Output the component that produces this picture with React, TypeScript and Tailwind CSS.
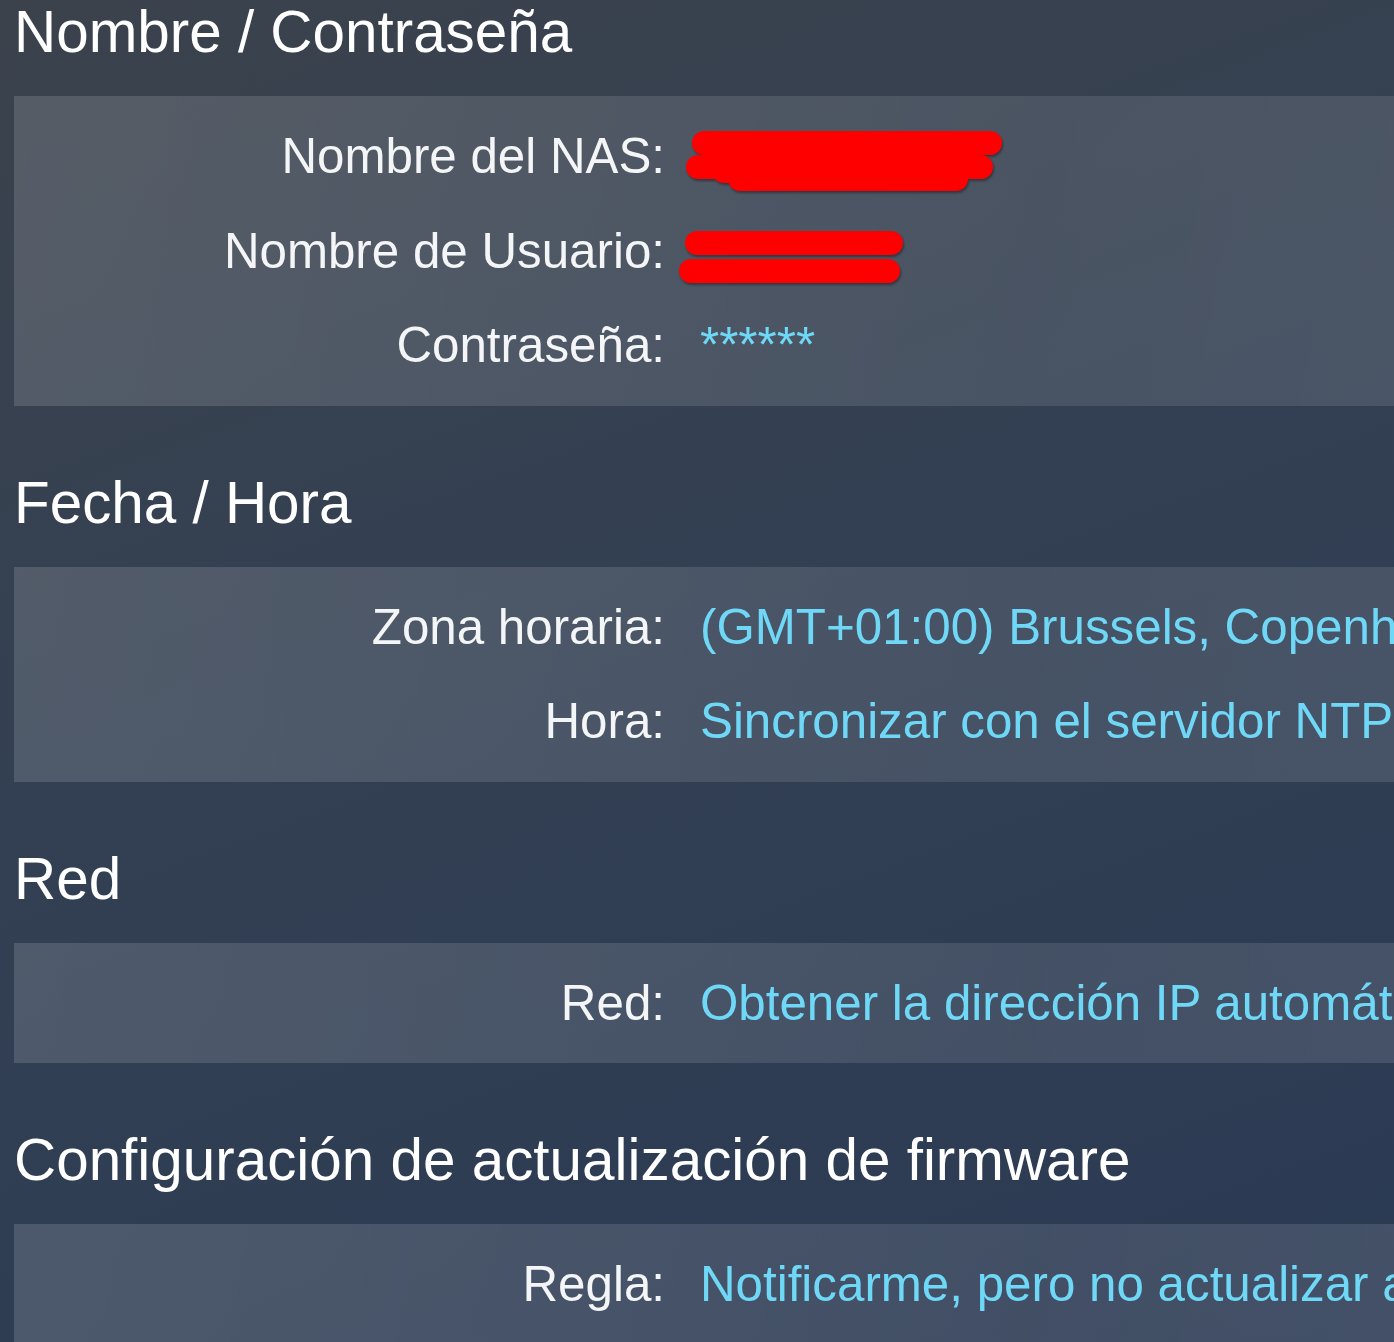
import React from "react";

interface Row {
  label: string;
  value?: string;
  redacted?: "nas" | "user";
}

interface Section {
  title: string;
  rows: Row[];
}

const sections: Section[] = [
  {
    title: "Nombre / Contraseña",
    rows: [
      { label: "Nombre del NAS:", redacted: "nas" },
      { label: "Nombre de Usuario:", redacted: "user" },
      { label: "Contraseña:", value: "******" },
    ],
  },
  {
    title: "Fecha / Hora",
    rows: [
      { label: "Zona horaria:", value: "(GMT+01:00) Brussels, Copenhagen, Madrid, Paris" },
      { label: "Hora:", value: "Sincronizar con el servidor NTP" },
    ],
  },
  {
    title: "Red",
    rows: [{ label: "Red:", value: "Obtener la dirección IP automáticamente" }],
  },
  {
    title: "Configuración de actualización de firmware",
    rows: [{ label: "Regla:", value: "Notificarme, pero no actualizar automáticamente" }],
  },
];

// red marker strokes hiding the private values
function Scribble({ kind }: { kind: "nas" | "user" }) {
  const strokes =
    kind === "nas"
      ? [
          [28, 34, 314, 34],
          [22, 58, 305, 58],
          [48, 62, 262, 62],
          [64, 70, 280, 70],
        ]
      : [
          [21, 39, 215, 39],
          [15, 67, 212, 67],
        ];
  return (
    <svg
      width="340"
      height="94"
      viewBox="0 0 340 94"
      className="-ml-[24px] shrink-0 [filter:drop-shadow(1px_2px_1px_rgba(0,0,0,0.35))]"
    >
      {strokes.map(([x1, y1, x2, y2], i) => (
        <line
          key={i}
          x1={x1}
          y1={y1}
          x2={x2}
          y2={y2}
          stroke="#ff0000"
          strokeWidth="24"
          strokeLinecap="round"
        />
      ))}
    </svg>
  );
}

export default function App() {
  return (
    <div
      className="w-[1394px] h-[1342px] overflow-hidden bg-[linear-gradient(160deg,#3b424c_0%,#334053_45%,#2b3a54_100%)] text-white"
      style={{ fontFamily: '"Liberation Sans", Arial, sans-serif' }}
    >
      <div className="w-[1700px] pl-[14px]">
        {sections.map((section, si) => (
          <div key={section.title} className={si === 0 ? "" : "mt-[65px]"}>
            <h2 className="text-[58.4px] leading-[64px] font-normal whitespace-nowrap">{section.title}</h2>
            <div className="mt-[32px] py-[13px] bg-[linear-gradient(100deg,rgba(255,255,255,0.14)_0%,rgba(255,255,255,0.1)_60%,rgba(255,255,255,0.12)_100%)]">
              {section.rows.map((row) => (
                <div key={row.label} className="flex items-center h-[94.5px] text-[49.3px] whitespace-nowrap">
                  <div className="w-[651px] shrink-0 text-right text-[#f4f5f6]">{row.label}</div>
                  <div className="pl-[35px] flex items-center text-[#6fd8f7]">
                    {row.redacted ? <Scribble kind={row.redacted} /> : row.value}
                  </div>
                </div>
              ))}
            </div>
          </div>
        ))}
      </div>
    </div>
  );
}
